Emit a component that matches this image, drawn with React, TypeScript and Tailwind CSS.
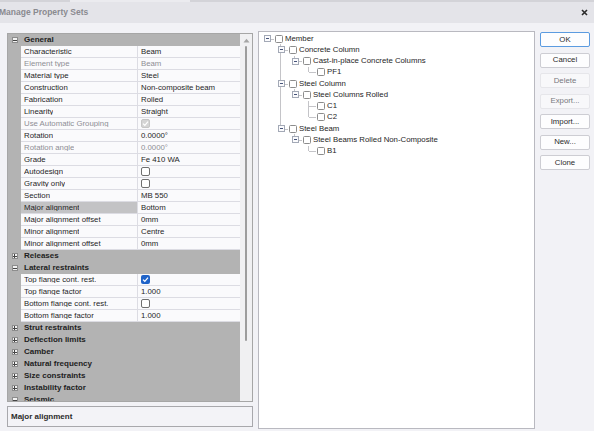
import type { ReactNode } from "react";

type PropRow =
  | { h: string; open?: boolean }
  | {
      l: string;
      v?: string;
      c?: "on" | "off" | "dis";
      dim?: boolean;
      sel?: boolean;
    };

const rows: PropRow[] = [
  { h: "General", open: true },
  { l: "Characteristic", v: "Beam" },
  { l: "Element type", v: "Beam", dim: true },
  { l: "Material type", v: "Steel" },
  { l: "Construction", v: "Non-composite beam" },
  { l: "Fabrication", v: "Rolled" },
  { l: "Linearity", v: "Straight" },
  { l: "Use Automatic Grouping", c: "dis", dim: true },
  { l: "Rotation", v: "0.0000°" },
  { l: "Rotation angle", v: "0.0000°", dim: true },
  { l: "Grade", v: "Fe 410 WA" },
  { l: "Autodesign", c: "off" },
  { l: "Gravity only", c: "off" },
  { l: "Section", v: "MB 550" },
  { l: "Major alignment", v: "Bottom", sel: true },
  { l: "Major alignment offset", v: "0mm" },
  { l: "Minor alignment", v: "Centre" },
  { l: "Minor alignment offset", v: "0mm" },
  { h: "Releases" },
  { h: "Lateral restraints", open: true },
  { l: "Top flange cont. rest.", c: "on" },
  { l: "Top flange factor", v: "1.000" },
  { l: "Bottom flange cont. rest.", c: "off" },
  { l: "Bottom flange factor", v: "1.000" },
  { h: "Strut restraints" },
  { h: "Deflection limits" },
  { h: "Camber" },
  { h: "Natural frequency" },
  { h: "Size constraints" },
  { h: "Instability factor" },
  { h: "Seismic", open: true },
];

type TNode = { label: string; children?: TNode[] };

const tree: TNode = {
  label: "Member",
  children: [
    {
      label: "Concrete Column",
      children: [
        { label: "Cast-in-place Concrete Columns", children: [{ label: "PF1" }] },
      ],
    },
    {
      label: "Steel Column",
      children: [
        { label: "Steel Columns Rolled", children: [{ label: "C1" }, { label: "C2" }] },
      ],
    },
    {
      label: "Steel Beam",
      children: [
        { label: "Steel Beams Rolled Non-Composite", children: [{ label: "B1" }] },
      ],
    },
  ],
};

type FlatNode = { node: TNode; level: number; last: boolean; guides: boolean[] };

const flatten = (
  node: TNode,
  level: number,
  last: boolean,
  guides: boolean[],
  out: FlatNode[] = []
) => {
  out.push({ node, level, last, guides });
  const kids = node.children ?? [];
  kids.forEach((k, i) =>
    flatten(k, level + 1, i === kids.length - 1, [...guides, !last], out)
  );
  return out;
};

const Check = () => (
  <svg width="7" height="7" viewBox="0 0 7 7">
    <path d="M1 3.6 L2.8 5.3 L6 1.6" stroke="white" strokeWidth="1.2" fill="none" />
  </svg>
);

const GridCheckbox = ({ state }: { state: "on" | "off" | "dis" }) => {
  if (state === "on")
    return (
      <span className="flex h-[9px] w-[9px] items-center justify-center rounded-[2px] bg-[#1f63c8]">
        <Check />
      </span>
    );
  if (state === "dis")
    return (
      <span className="flex h-[9px] w-[9px] items-center justify-center rounded-[2px] border border-[#c6c6c6] bg-[#d4d4d4]">
        <Check />
      </span>
    );
  return <span className="h-[9px] w-[9px] rounded-[2px] border border-[#6f6f6f] bg-white" />;
};

const GutterBox = ({ open }: { open?: boolean }) => (
  <span className="relative flex h-[6px] w-[6px] items-center justify-center border border-[#8d8d8d] bg-[#f2f2f2]">
    <span className="h-[1px] w-[4px] bg-[#444]" />
    {!open && <span className="absolute h-[4px] w-[1px] bg-[#444]" />}
  </span>
);

const PropertyGrid = () => (
  <div className="flex h-[369px] border border-[#a6a6a6] bg-[#b3b3b3]">
    <div className="flex flex-1 flex-col overflow-hidden">
      {rows.map((r, i) =>
        "h" in r ? (
          <div key={i} className="flex h-[12px] shrink-0 items-center">
            <div className="flex w-[13px] shrink-0 justify-center">
              <GutterBox open={r.open} />
            </div>
            <span className="pl-[3px] text-[8px] font-bold text-[#1e1e1e]">{r.h}</span>
          </div>
        ) : (
          <div key={i} className="flex h-[12px] shrink-0">
            <div className="w-[13px] shrink-0" />
            <div
              className={`flex w-[117px] shrink-0 items-center border-b border-r border-[#dcdce3] pl-[3px] ${
                r.sel ? "bg-[#c3c3c5]" : "bg-[#fafafc]"
              } ${r.dim ? "text-[#8e8e94]" : "text-[#1f1f1f]"}`}
            >
              <span className="truncate">{r.l}</span>
            </div>
            <div
              className={`flex flex-1 items-center border-b border-[#dcdce3] bg-[#fafafc] pl-[3px] ${
                r.dim ? "text-[#8e8e94]" : "text-[#1f1f1f]"
              }`}
            >
              {r.c ? <GridCheckbox state={r.c} /> : r.v}
            </div>
          </div>
        )
      )}
    </div>
    <div className="flex w-[12px] shrink-0 flex-col items-center bg-[#f0f0f2]">
      <svg width="7" height="5" viewBox="0 0 7 5" className="mt-[4px]">
        <path d="M0.5 4.5 L3.5 0.8 L6.5 4.5 Z" fill="#a5a5a5" />
      </svg>
      <span className="mt-[3px] h-[295px] w-[2px] rounded-[1px] bg-[#9c9c9c]" />
    </div>
  </div>
);

const ExpandBox = () => (
  <span className="relative z-10 flex h-[7px] w-[7px] items-center justify-center border border-[#a3a9b6] bg-[#fbfbfd]">
    <span className="h-[1px] w-[3px] bg-[#46547a]" />
  </span>
);

const Cell = ({ children }: { children?: ReactNode }) => (
  <div className="relative flex h-full w-[14px] shrink-0 items-center justify-center">
    {children}
  </div>
);

const TreeRow = ({ item }: { item: FlatNode }) => {
  const { node, level, last, guides } = item;
  const hasKids = !!node.children?.length;
  const cells: ReactNode[] = [];
  for (let d = 0; d < level; d++) {
    cells.push(
      <Cell key={d}>
        {d > 0 && guides[d] && (
          <span className="absolute bottom-0 left-[6px] top-0 w-[1px] bg-[#c4c4c8]" />
        )}
      </Cell>
    );
  }
  cells.push(
    <Cell key="own">
      {level > 0 && (
        <span
          className={`absolute left-[6px] top-0 w-[1px] bg-[#c4c4c8] ${
            last ? "h-1/2" : "h-full"
          }`}
        />
      )}
      {level > 0 || hasKids ? (
        <span className="absolute left-[7px] right-0 top-1/2 h-[1px] bg-[#c4c4c8]" />
      ) : null}
      {hasKids && <ExpandBox />}
    </Cell>
  );
  return (
    <div className="flex h-[11.25px] items-center">
      {cells}
      <span className="ml-[1px] h-[8px] w-[8px] shrink-0 rounded-[1.5px] border border-[#8c8c8c] bg-white" />
      <span className="ml-[2px] whitespace-nowrap text-[#1e1e1e]">{node.label}</span>
    </div>
  );
};

const buttons: { label: string; disabled?: boolean; focus?: boolean }[] = [
  { label: "OK", focus: true },
  { label: "Cancel" },
  { label: "Delete", disabled: true },
  { label: "Export...", disabled: true },
  { label: "Import..." },
  { label: "New..." },
  { label: "Clone" },
];

export default function App() {
  const flat = flatten(tree, 0, true, []);
  return (
    <div className="flex h-[431px] w-[594px] flex-col overflow-hidden bg-[#f2f2f6] font-['Liberation_Sans',Arial,sans-serif] text-[7.8px] leading-none">
      <div className="flex h-[2px] shrink-0 bg-[#d3d3d8]">
        <div className="ml-[70px] w-[120px] bg-[#ebebef]" />
      </div>
      <div className="flex h-[21px] shrink-0 items-center justify-between bg-[#e4e4e9]">
        <span className="-ml-[1px] text-[8.5px] font-bold text-[#8a8a90]">Manage Property Sets</span>
        <svg width="7" height="7" viewBox="0 0 7 7" className="mr-[6px]">
          <path d="M1 1 L6 6 M6 1 L1 6" stroke="#2a2a2a" strokeWidth="1.6" />
        </svg>
      </div>
      <div className="flex flex-1 items-start">
        <div className="ml-[7px] flex w-[246px] shrink-0 flex-col pt-[10px]">
          <PropertyGrid />
          <div className="mt-[4px] flex h-[21px] items-center border border-[#a8a8ac] bg-[#f3f3f7] pl-[3px] text-[8px] font-bold text-[#2a2a2a]">
            Major alignment
          </div>
        </div>
        <div className="ml-[5px] mt-[8px] h-[398px] w-[277px] shrink-0 border border-[#b9b9c0] bg-white pl-[1px] pt-[1px]">
          {flat.map((f, i) => (
            <TreeRow key={i} item={f} />
          ))}
        </div>
        <div className="ml-[5px] mt-[9px] flex w-[50px] shrink-0 flex-col gap-[5.5px]">
          {buttons.map((b) => (
            <div
              key={b.label}
              className={`flex h-[15px] items-center justify-center rounded-[2px] border ${
                b.focus
                  ? "border-[#5b9be0] bg-[#fdfdfe] text-[#2a2a2a]"
                  : b.disabled
                  ? "border-[#e6e6ea] bg-[#f8f8fa] text-[#77777d]"
                  : "border-[#cdcdd3] bg-[#fdfdfe] text-[#2a2a2a]"
              }`}
            >
              {b.label}
            </div>
          ))}
        </div>
      </div>
    </div>
  );
}
